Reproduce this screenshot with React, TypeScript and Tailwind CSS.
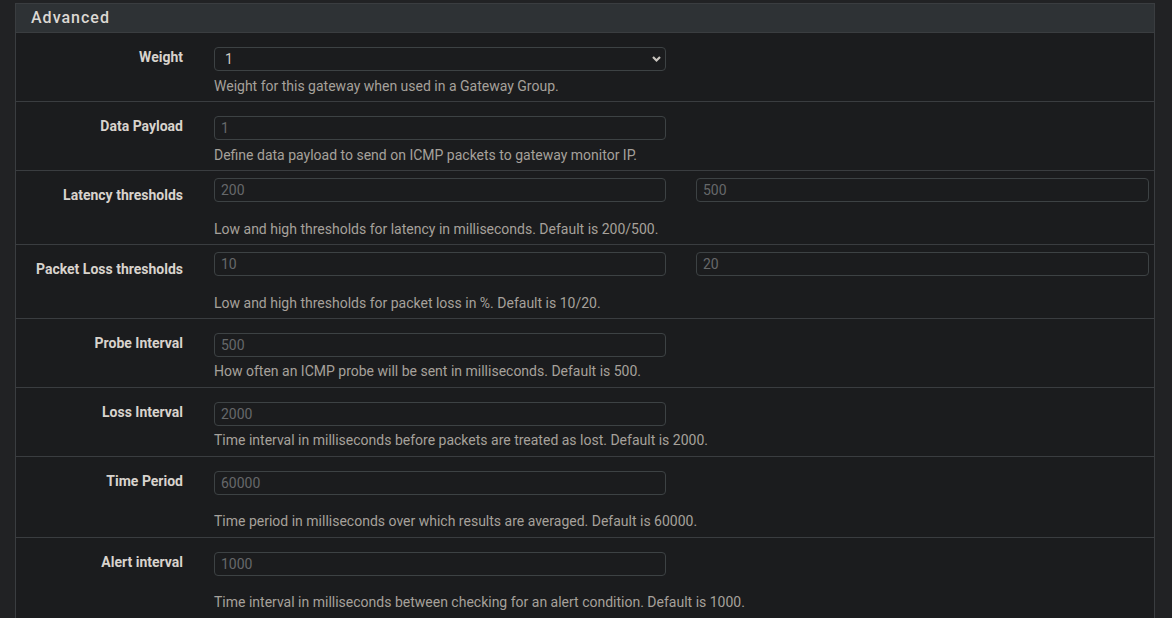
import type { FC } from "react";

type Row = {
  label: string;
  values: string[];
  help: string;
  select?: boolean;
  pt: string;
  mt: string;
  pb: string;
};

const rows: Row[] = [
  { label: "Weight", values: ["1"], help: "Weight for this gateway when used in a Gateway Group.", select: true, pt: "pt-[14px]", mt: "mt-[5px]", pb: "pb-[5px]" },
  { label: "Data Payload", values: ["1"], help: "Define data payload to send on ICMP packets to gateway monitor IP.", pt: "pt-[14px]", mt: "mt-[5px]", pb: "pb-[5px]" },
  { label: "Latency thresholds", values: ["200", "500"], help: "Low and high thresholds for latency in milliseconds. Default is 200/500.", pt: "pt-[7px]", mt: "mt-[17px]", pb: "pb-[5px]" },
  { label: "Packet Loss thresholds", values: ["10", "20"], help: "Low and high thresholds for packet loss in %. Default is 10/20.", pt: "pt-[7px]", mt: "mt-[17px]", pb: "pb-[5px]" },
  { label: "Probe Interval", values: ["500"], help: "How often an ICMP probe will be sent in milliseconds. Default is 500.", pt: "pt-[14px]", mt: "mt-[4px]", pb: "pb-[6px]" },
  { label: "Loss Interval", values: ["2000"], help: "Time interval in milliseconds before packets are treated as lost. Default is 2000.", pt: "pt-[14px]", mt: "mt-[4px]", pb: "pb-[6px]" },
  { label: "Time Period", values: ["60000"], help: "Time period in milliseconds over which results are averaged. Default is 60000.", pt: "pt-[14px]", mt: "mt-[16px]", pb: "pb-[6px]" },
  { label: "Alert interval", values: ["1000"], help: "Time interval in milliseconds between checking for an alert condition. Default is 1000.", pt: "pt-[14px]", mt: "mt-[16px]", pb: "pb-[6px]" },
];

const Field: FC<{ value: string; select?: boolean; wide?: boolean }> = ({ value, select, wide }) => (
  <div
    className={`${wide ? "w-[453px]" : "w-[452px]"} h-[24px] rounded-[4px] border border-[#3d4244] bg-[#1b1c1e] flex items-center justify-between pr-[3px] text-[14px] ${
      select ? "pl-[10px] text-[#cfcac4]" : "pl-[6px] text-[#66686a]"
    }`}
  >
    <span>{value}</span>
    {select && (
      <svg width="11" height="8" viewBox="0 0 11 8">
        <path d="M2 2 L5.5 5.5 L9 2" fill="none" stroke="#c9c4be" strokeWidth="2.2" />
      </svg>
    )}
  </div>
);

const App: FC = () => {
  return (
    <div className="w-[1172px] h-[618px] overflow-hidden bg-[#212224] pt-[3px] pl-[15px] font-['Roboto','Liberation_Sans',sans-serif]">
      <div className="w-[1140px] border border-[#3a3d40] bg-[#1b1c1e]">
        <div className="h-[29px] bg-[#2e3235] border-b border-[#3a3d40] flex items-center pl-[15px]">
          <h2 className="text-[16px] font-medium tracking-[1px] text-[#dcd8d3]">Advanced</h2>
        </div>
        {rows.map((row, i) => (
          <div
            key={row.label}
            className={`flex ${i < rows.length - 1 ? "border-b border-[#3a3d40]" : ""}`}
          >
            <div className="w-[198px] pr-[31px] pt-[14px] text-right text-[14px] leading-[20px] font-bold text-[#d8d3cd]">
              {row.label}
            </div>
            <div className={`flex flex-col ${row.pt} ${row.pb}`}>
              <div className="flex gap-[30px]">
                {row.values.map((v, j) => (
                  <Field key={j} value={v} select={row.select} wide={j === 1} />
                ))}
              </div>
              <p className={`${row.mt} text-[14px] leading-[20px] text-[#a6a19b]`}>{row.help}</p>
            </div>
          </div>
        ))}
      </div>
    </div>
  );
};

export default App;
